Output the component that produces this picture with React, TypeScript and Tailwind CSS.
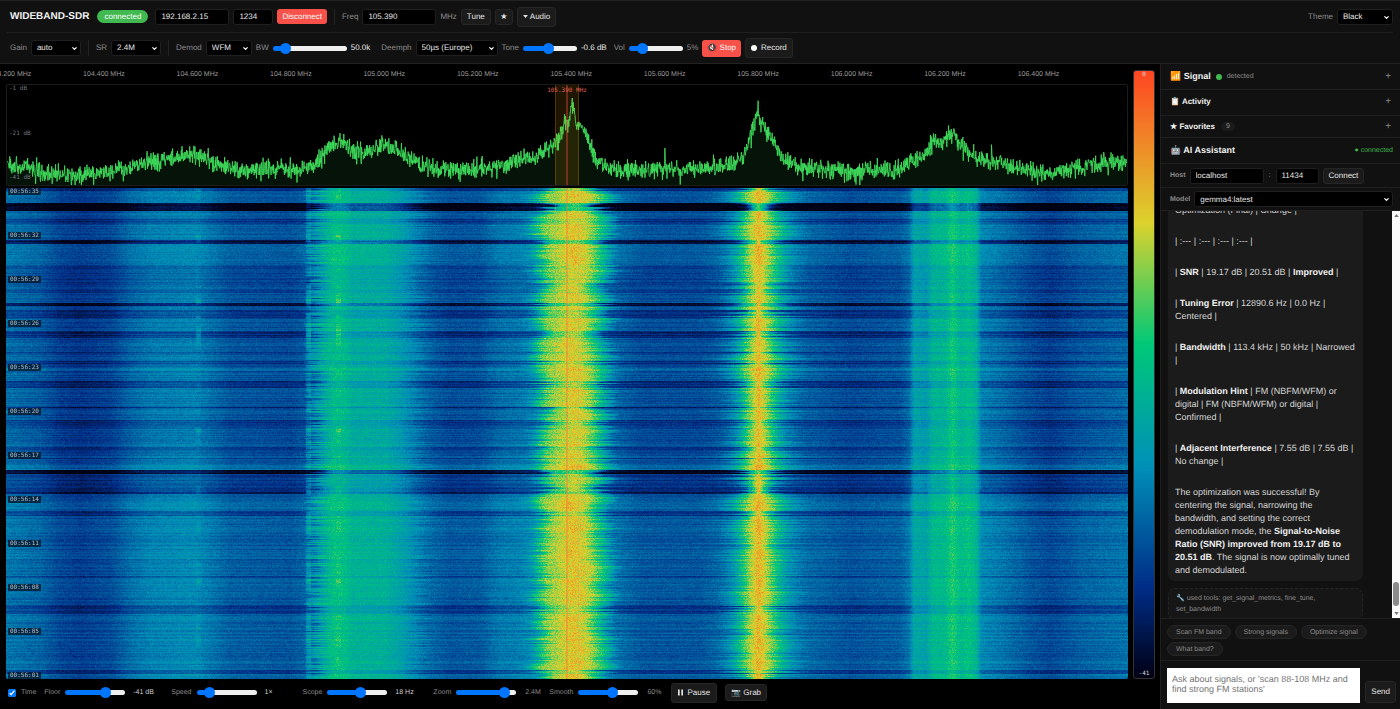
import { useLayoutEffect, useRef, useState, type ReactNode } from "react";
import { ChevronDown } from "lucide-react";

type Point = [number, number];

// Both profiles are given on a 1122 unit wide frequency span
const SPAN = 1122;

const NOISE_FLOOR: Point[] = [
  [0, 80], [21, 81], [34, 88], [54, 90], [84, 89], [109, 86], [129, 81], [144, 75], [174, 73], [184, 69],
  [194, 72], [209, 79], [224, 84], [254, 85], [294, 84], [309, 80], [319, 66], [329, 59], [338, 56],
  [344, 65], [359, 68], [369, 63], [377, 59], [389, 64], [399, 72], [414, 80], [434, 84], [474, 83],
  [502, 81], [512, 73], [529, 74], [539, 65], [549, 58], [554, 52], [559, 36], [562, 40], [566, 20],
  [568, 24], [571, 43], [575, 36], [582, 55], [591, 75], [604, 83], [634, 85], [658, 85], [659, 66],
  [660, 85], [694, 83], [724, 80], [736, 74], [742, 60], [746, 44], [750, 37], [752, 22], [754, 36],
  [762, 46], [769, 60], [779, 76], [794, 83], [844, 86], [894, 84], [906, 77], [919, 72], [924, 61],
  [931, 54], [937, 59], [942, 50], [949, 48], [954, 58], [964, 68], [974, 74], [994, 76], [1009, 83],
  [1034, 89], [1054, 88], [1084, 81], [1104, 77], [1122, 78],
];

const HEAT: Point[] = [
  [0, 0.28], [34, 0.24], [54, 0.18], [74, 0.16], [104, 0.19], [124, 0.26], [144, 0.3], [189, 0.32], [204, 0.28],
  [224, 0.23], [284, 0.21], [299, 0.24], [306, 0.34], [316, 0.42], [326, 0.51], [338, 0.5], [346, 0.45],
  [379, 0.44], [394, 0.39], [409, 0.32], [424, 0.25], [444, 0.21], [474, 0.22], [494, 0.28], [519, 0.3],
  [529, 0.37], [535, 0.52], [542, 0.65], [552, 0.7], [566, 0.77], [574, 0.75], [583, 0.68], [590, 0.57],
  [598, 0.43], [608, 0.27], [634, 0.21], [694, 0.21], [714, 0.25], [726, 0.34], [734, 0.47], [741, 0.64],
  [746, 0.71], [752, 0.8], [758, 0.73], [765, 0.62], [773, 0.47], [784, 0.33], [800, 0.25], [844, 0.2],
  [894, 0.23], [903, 0.28], [908, 0.41], [920, 0.39], [926, 0.47], [939, 0.48], [946, 0.56], [954, 0.48],
  [962, 0.51], [970, 0.46], [975, 0.32], [994, 0.28], [1024, 0.21], [1044, 0.18], [1074, 0.23], [1122, 0.27],
];

// [first row, last row, level change] on a 491 row history
const BANDS: [number, number, number][] = [
  [0, 2, -0.08], [15, 22, -0.25], [31, 35, -0.06], [37, 51, 0.02], [52, 55, -0.17], [56, 74, 0.03],
  [78, 98, -0.03], [102, 104, -0.05], [115, 117, -0.15], [122, 129, -0.07], [143, 149, -0.09],
  [164, 166, -0.05], [173, 175, -0.07], [180, 182, 0.05], [193, 199, -0.08], [219, 219, -0.09],
  [232, 240, -0.06], [259, 262, -0.05], [270, 270, -0.09], [277, 281, 0.05], [282, 285, -0.22],
  [286, 303, -0.06], [304, 305, -0.12], [310, 322, 0.04], [323, 327, -0.06], [328, 416, 0.02],
  [388, 389, -0.05], [417, 425, -0.05], [426, 481, 0.02], [482, 485, -0.08], [486, 491, 0.03],
];

const SCALE: [number, number, number, number][] = [
  [0, 0, 0, 20],
  [0.15, 0, 45, 135],
  [0.35, 0, 144, 184],
  [0.55, 0, 200, 120],
  [0.75, 220, 210, 45],
  [1, 255, 70, 35],
];

function rng(seed: number) {
  let s = seed;
  return () => {
    s = (s + 0x6d2b79f5) | 0;
    let t = Math.imul(s ^ (s >>> 15), 1 | s);
    t = (t + Math.imul(t ^ (t >>> 7), 61 | t)) ^ t;
    return ((t ^ (t >>> 14)) >>> 0) / 4294967296;
  };
}

function sample(points: Point[], x: number) {
  if (x <= points[0][0]) return points[0][1];
  for (let i = 1; i < points.length; i++) {
    const [x1, y1] = points[i];
    if (x <= x1) {
      const [x0, y0] = points[i - 1];
      return y0 + ((y1 - y0) * (x - x0)) / (x1 - x0);
    }
  }
  return points[points.length - 1][1];
}

function heatColor(v: number) {
  const c = Math.max(0, Math.min(1, v));
  for (let i = 1; i < SCALE.length; i++) {
    if (c <= SCALE[i][0]) {
      const a = SCALE[i - 1];
      const b = SCALE[i];
      const t = (c - a[0]) / (b[0] - a[0]);
      return [a[1] + (b[1] - a[1]) * t, a[2] + (b[2] - a[2]) * t, a[3] + (b[3] - a[3]) * t];
    }
  }
  return [255, 70, 35];
}

function buildTrace() {
  const rand = rng(7);
  const pts: string[] = [];
  for (let x = 0; x <= SPAN; x += 0.35) {
    let y = sample(NOISE_FLOOR, x) + (rand() + rand() + rand() - 1.5) * 9;
    if (rand() < 0.05) y += rand() * 11;
    if (rand() < 0.03) y -= rand() * 6;
    pts.push(`${x.toFixed(2)},${Math.min(100, y).toFixed(1)}`);
  }
  return pts.join(" ");
}

const TRACE = buildTrace();

function paintWaterfall(canvas: HTMLCanvasElement) {
  const w = canvas.clientWidth;
  const h = canvas.clientHeight;
  const ctx = canvas.getContext("2d");
  if (!ctx || !w || !h) return;
  canvas.width = w;
  canvas.height = h;
  const img = ctx.createImageData(w, h);
  const rand = rng(42);
  const levels = Array.from({ length: SPAN * 2 + 1 }, (_, i) => sample(HEAT, i / 2));
  let slow = 0;
  let drift = 0;
  let spot = 0;

  for (let y = 0; y < h; y++) {
    const row = (y / h) * 491;
    let shift = (rand() - 0.5) * 0.06;
    for (const [a, b, d] of BANDS) if (row >= a && row < b + 1) shift += d;
    slow = slow * 0.8 + (rand() - 0.5) * 0.3;
    drift = drift * 0.85 + (rand() - 0.5) * 5;
    spot = spot * 0.8 + (rand() - 0.5) * 0.08;
    const quiet = shift < -0.06;
    const left = Math.max(0.45, 1 + slow * 0.7 + (rand() - 0.5) * 0.5 + (quiet ? -0.2 : 0.03));
    const right = Math.max(0.35, 1 + slow * 0.9 + (rand() - 0.5) * 0.7 + (quiet ? -0.4 : 0));
    const edge = (rand() - 0.5) * 24;

    for (let x = 0; x < w; x++) {
      const f = (x / w) * SPAN;
      let src = f;
      if (f > 480 && f < 660) {
        const d = f - 566;
        const bend = Math.exp(-(d * d) / 4500);
        src = 566 + (d + drift * 0.6 * bend) / (1 + (left - 1) * bend);
      } else if (f >= 660 && f < 850) {
        const d = f - 752;
        src = 752 + d / (1 + (right - 1) * Math.exp(-(d * d) / 3000));
      } else if (f > 285 && f < 345) {
        src = Math.max(285, f + edge * Math.exp(-((f - 312) ** 2) / 150));
      } else if (f > 380 && f < 460) {
        src = f - edge * 0.7 * Math.exp(-((f - 415) ** 2) / 300);
      }
      let v = levels[Math.max(0, Math.min(SPAN * 2, Math.round(src * 2)))];
      const strength = Math.max(0, Math.min(1, (v - 0.3) / 0.3));
      v += shift * (1 - strength * 0.3);
      if (Math.abs(f - 332) < 3) v += Math.max(0, spot) * 1.3;
      if (Math.abs(f - 302) < 2.5) v += 0.06 + spot;
      if (Math.abs(f - 192) < 3) v += Math.max(0, spot);
      if (quiet) {
        const carrier = shift < -0.2 ? 0.42 : 0.8;
        if (Math.abs(f - 752) < 1.3) v = Math.max(v, carrier);
        if (Math.abs(f - 743) < 0.8 || Math.abs(f - 761) < 0.8) v = Math.max(v, carrier * 0.58);
      }
      v += (rand() + rand() - 1) * (0.05 + strength * 0.03);
      const [r, g, b] = heatColor(v);
      const i = (y * w + x) * 4;
      img.data[i] = r;
      img.data[i + 1] = g;
      img.data[i + 2] = b;
      img.data[i + 3] = 255;
    }
  }
  ctx.putImageData(img, 0, 0);
}

function Waterfall() {
  const ref = useRef<HTMLCanvasElement>(null);
  useLayoutEffect(() => {
    const canvas = ref.current;
    if (!canvas) return;
    paintWaterfall(canvas);
    const onResize = () => paintWaterfall(canvas);
    window.addEventListener("resize", onResize);
    return () => window.removeEventListener("resize", onResize);
  }, []);
  return <canvas ref={ref} className="absolute inset-0 h-full w-full" />;
}

const field = "h-4 rounded-[3px] border border-[#1f1f1f] bg-black px-[5px] text-[8px] text-[#e6e6e6] outline-none";
const button = "rounded-[3px] border border-[#262626] bg-[#1b1b1b] text-[8px] text-[#e6e6e6] whitespace-nowrap";

function Picker({ id, value, className }: { id: string; value: string; className: string }) {
  return (
    <div className={`relative flex ${className}`}>
      <select id={id} defaultValue={value} className={`${field} w-full appearance-none`}>
        <option>{value}</option>
      </select>
      <ChevronDown size={7} strokeWidth={4} className="pointer-events-none absolute right-[3px] top-[5px] text-white" />
    </div>
  );
}

function Slider({ id, start, className }: { id: string; start: number; className: string }) {
  const [value, setValue] = useState(start);
  return (
    <input
      id={id}
      type="range"
      value={value}
      onChange={(e) => setValue(Number(e.target.value))}
      style={{ background: `linear-gradient(to right, #0075ff ${value}%, #efefef ${value}%)` }}
      className={`h-[5px] appearance-none rounded-full [&::-webkit-slider-thumb]:size-[11px] [&::-webkit-slider-thumb]:appearance-none [&::-webkit-slider-thumb]:rounded-full [&::-webkit-slider-thumb]:bg-[#0075ff] ${className}`}
    />
  );
}

function Divider() {
  return <span className="mx-[3px] h-4 w-px bg-[#222]" />;
}

function Header() {
  return (
    <header className="border-y border-[#222] bg-[#111] px-[7px] text-[8px] text-[#8b8b8b]">
      <div className="flex h-8 items-center gap-1 border-b border-[#1f1f1f] pl-[3px]">
        <h1 className="mr-1 text-[10px] font-bold text-[#f0f0f0]">WIDEBAND-SDR</h1>
        <span className="mr-[3px] rounded-full bg-[#3fb950] px-[7px] leading-[13px] text-white">connected</span>
        <input aria-label="Server address" defaultValue="192.168.2.15" className={`${field} w-[74px]`} />
        <input aria-label="Server port" defaultValue="1234" className={`${field} w-10`} />
        <button className="h-[15px] rounded-[3px] bg-[#f85149] px-[5px] text-white">Disconnect</button>
        <Divider />
        <label htmlFor="freq">Freq</label>
        <input id="freq" defaultValue="105.390" className={`${field} w-[74px]`} />
        <span>MHz</span>
        <button className={`${button} h-4 px-[5px]`}>Tune</button>
        <button aria-label="Add favorite" className={`${button} h-4 w-[18px]`}>★</button>
        <button className={`${button} flex h-5 items-center gap-[2px] px-[5px]`}>
          <svg viewBox="0 0 8 5" className="h-[3px] w-[5px]" fill="currentColor"><path d="M0 0h8L4 5z" /></svg>
          Audio
        </button>
        <label htmlFor="theme" className="ml-auto">Theme</label>
        <Picker id="theme" value="Black" className="w-14" />
      </div>
      <div className="flex h-[30px] items-center gap-1 pl-[3px]">
        <label htmlFor="gain">Gain</label>
        <Picker id="gain" value="auto" className="w-[50px]" />
        <Divider />
        <label htmlFor="rate">SR</label>
        <Picker id="rate" value="2.4M" className="w-[50px]" />
        <Divider />
        <label htmlFor="demod">Demod</label>
        <Picker id="demod" value="WFM" className="w-[46px]" />
        <label htmlFor="bw">BW</label>
        <Slider id="bw" start={12} className="w-[74px]" />
        <span className="mr-[7px] text-[#e6e6e6]">50.0k</span>
        <label htmlFor="deemph">Deemph</label>
        <Picker id="deemph" value="50µs (Europe)" className="w-[82px]" />
        <label htmlFor="tone">Tone</label>
        <Slider id="tone" start={46} className="w-[54px]" />
        <span className="mr-[3px] text-[#e6e6e6]">-0.6 dB</span>
        <label htmlFor="vol">Vol</label>
        <Slider id="vol" start={18} className="w-[54px]" />
        <span>5%</span>
        <button className="h-[17px] rounded-[3px] bg-[#f85149] px-[5px] text-white">🔇 Stop</button>
        <button className={`${button} flex h-5 items-center gap-1 px-[5px]`}>
          <span className="size-[6px] rounded-full bg-white" />
          Record
        </button>
      </div>
    </header>
  );
}

const freqs = ["104.200", "104.400", "104.600", "104.800", "105.000", "105.200", "105.400", "105.600", "105.800", "106.000", "106.200", "106.400"];
const times = ["00:56:35", "00:56:32", "00:56:29", "00:56:26", "00:56:23", "00:56:20", "00:56:17", "00:56:14", "00:56:11", "00:56:08", "00:56:05", "00:56:01"];

function Scope() {
  return (
    <section className="flex min-w-0 flex-1 flex-col">
      {/* Frequency axis */}
      <div className="relative h-5 shrink-0 overflow-hidden text-[7px] leading-[11px] text-[#9a9a9a]">
        {freqs.map((f, i) => (
          <span
            key={f}
            className="absolute top-[5px] -translate-x-1/2 whitespace-nowrap"
            style={{ left: `${0.93 + i * 8.285}%` }}
          >
            {f} MHz
          </span>
        ))}
      </div>

      <div className="ml-[6px] flex min-h-0 flex-1 flex-col gap-[2px] font-['DejaVu_Sans_Mono',monospace] text-[6px] leading-[7px]">
        {/* Spectrum */}
        <div className="relative h-[102px] shrink-0 overflow-hidden rounded-[2px] border border-[#1c1c1c]">
          <svg viewBox="0 0 1122 100" preserveAspectRatio="none" className="h-full w-full">
            <polygon points={`0,100 ${TRACE} 1122,100`} fill="#3fb950" fillOpacity="0.1" />
            <polyline points={TRACE} fill="none" stroke="#40dc5c" strokeOpacity="0.9" />
            <rect x="549" y="0" width="24" height="100" fill="#ffaa00" fillOpacity="0.12" />
            <path d="M549.5 0v100M572.5 0v100" stroke="#ffaa00" strokeOpacity="0.25" />
            <path d="M561 0v100" stroke="#f85149" strokeOpacity="0.6" strokeWidth="1.2" />
          </svg>
          <div className="absolute inset-y-0 left-[2px] flex flex-col justify-between pb-1 text-[#6e7681]">
            <span>-1 dB</span>
            <span>-21 dB</span>
            <span>-41 dB</span>
          </div>
          <span className="absolute left-1/2 top-[2px] -translate-x-1/2 text-[#e0605a]">105.390 MHz</span>
        </div>

        {/* Waterfall */}
        <div className="relative min-h-0 flex-1 overflow-hidden rounded-[2px]">
          <Waterfall />
          <svg viewBox="0 0 1122 100" preserveAspectRatio="none" className="absolute inset-0 h-full w-full">
            <path d="M549.5 0v100M572.5 0v100" stroke="#b4b478" strokeOpacity="0.3" />
            <path d="M561 0v100" stroke="#f8703c" strokeOpacity="0.6" strokeWidth="1.2" />
          </svg>
          <div className="absolute inset-y-0 left-[2px] flex flex-col justify-between text-[#b4c0c8]">
            {times.map((t) => (
              <span key={t} className="bg-[#06182d]/80 px-[2px]">{t}</span>
            ))}
          </div>
        </div>
      </div>

      <Controls />
    </section>
  );
}

function Knob({ id, label, start, value, wide }: { id: string; label: string; start: number; value: string; wide?: boolean }) {
  return (
    <div className="flex items-center">
      <label htmlFor={id} className="mr-[5px]">{label}</label>
      <Slider id={id} start={start} className="w-[60px]" />
      <span className={wide ? "ml-2 min-w-[30px] text-[#d0d0d0]" : "ml-[9px] min-w-4"}>{value}</span>
    </div>
  );
}

function Controls() {
  return (
    <div className="flex h-[30px] shrink-0 items-center gap-2 pb-[3px] pl-2 text-[7px] leading-[11px] text-[#8b8b8b]">
      <label className="flex items-center gap-[5px]">
        <input type="checkbox" defaultChecked className="size-2 accent-[#0075ff]" />
        Time
      </label>
      <Knob id="floor" label="Floor" start={71} value="-41 dB" wide />
      <Knob id="speed" label="Speed" start={15} value="1×" wide />
      <Knob id="scope" label="Scope" start={56} value="18 Hz" wide />
      <Knob id="zoom" label="Zoom" start={87} value="2.4M" />
      <Knob id="smooth" label="Smooth" start={58} value="60%" />
      <button className={`${button} flex h-5 items-center gap-1 px-[6px]`}>
        <svg viewBox="0 0 6 7" className="h-[7px] w-[5px]" fill="currentColor"><path d="M0 0h2v7H0zM4 0h2v7H4z" /></svg>
        Pause
      </button>
      <button className={`${button} h-[17px] px-[5px]`}>📷 Grab</button>
    </div>
  );
}

function Legend() {
  return (
    <div className="mx-[5px] mb-[30px] mt-[6px] flex w-[22px] shrink-0 flex-col items-center justify-between rounded-[3px] border border-[#333] bg-[linear-gradient(to_bottom,#ff4623_0%,#dcd22d_25%,#00c878_45%,#0090b8_65%,#002d87_85%,#000014_100%)] font-['DejaVu_Sans_Mono',monospace] text-[6px] leading-[8px] text-[#ddd]">
      <span>0</span>
      <span>-41</span>
    </div>
  );
}

function Fold({ title, children, className }: { title: ReactNode; children?: ReactNode; className: string }) {
  return (
    <div className={`flex shrink-0 items-center border-b border-[#1f1f1f] px-[9px] text-[7px] leading-[11px] text-[#8b8b8b] ${className}`}>
      <h2 className="font-bold text-[#f0f0f0]">{title}</h2>
      {children}
      <button aria-label="Expand" className="ml-auto text-[10px]">+</button>
    </div>
  );
}

function Chat() {
  return (
    <div className="flex min-h-0 flex-1 border-b border-[#1f1f1f]">
      <div className="min-w-0 flex-1 overflow-hidden px-[7px]">
        <div className="-mt-5 w-[90%] space-y-[18px] rounded-[7px] bg-[#1b1b1b] px-[7px] pb-1 text-[9px] leading-[13px] text-[#d6d6d6] [&_b]:text-[#f0f0f0]">
          <p>| Metric | Initial |<br />Optimization (Final) | Change |</p>
          <p>| :--- | :--- | :--- | :--- |</p>
          <p>| <b>SNR</b> | 19.17 dB | 20.51 dB | <b>Improved</b> |</p>
          <p>| <b>Tuning Error</b> | 12890.6 Hz | 0.0 Hz | Centered |</p>
          <p>| <b>Bandwidth</b> | 113.4 kHz | 50 kHz | Narrowed |</p>
          <p>| <b>Modulation Hint</b> | FM (NBFM/WFM) or digital | FM (NBFM/WFM) or digital | Confirmed |</p>
          <p>| <b>Adjacent Interference</b> | 7.55 dB | 7.55 dB | No change |</p>
          <p>
            The optimization was successful! By centering the signal, narrowing the bandwidth, and setting the correct
            demodulation mode, the <b>Signal-to-Noise Ratio (SNR) improved from 19.17 dB to 20.51 dB</b>. The signal is
            now optimally tuned and demodulated.
          </p>
        </div>
        <div className="mt-[7px] w-[90%] rounded-[7px] border border-dashed border-[#262626] bg-[#161616] px-[7px] py-1 text-[7px] leading-[11px] text-[#8b8b8b]">
          🔧 used tools: get_signal_metrics, fine_tune, set_bandwidth
        </div>
      </div>
      <div className="flex w-2 flex-col items-center bg-[#fafafa] py-[3px]">
        <svg viewBox="0 0 6 4" className="h-[3px] w-[5px]" fill="#777"><path d="M0 4h6L3 0z" /></svg>
        <div className="mt-auto h-6 w-[6px] rounded-full bg-[#8b8b8b]" />
        <svg viewBox="0 0 6 4" className="mt-[6px] h-[3px] w-[5px]" fill="#777"><path d="M0 0h6L3 4z" /></svg>
      </div>
    </div>
  );
}

function Sidebar() {
  return (
    <aside className="flex w-60 shrink-0 flex-col border-l border-[#1f1f1f] bg-[#111]">
      <Fold className="h-[26px]" title={<span className="text-[9px]">📶 Signal</span>}>
        <span className="ml-[5px] size-[6px] rounded-full bg-[#3fb950]" />
        <span className="ml-[5px]">detected</span>
      </Fold>
      <Fold className="h-[26px] pb-[2px]" title={<span className="text-[8px]">📋 Activity</span>} />
      <Fold className="h-[22px]" title={<span className="text-[8px]">★ Favorites</span>}>
        <span className="ml-[6px] rounded-full bg-[#1b1b1b] px-[5px] leading-[9px]">9</span>
      </Fold>
      <div className="flex h-[26px] shrink-0 items-center justify-between border-b border-[#1f1f1f] pl-[9px] pr-[7px] text-[7px] leading-[11px] text-[#3fb950]">
        <h2 className="text-[9px] font-bold text-[#f0f0f0]">🤖 AI Assistant</h2>
        <span>● connected</span>
      </div>
      <div className="flex h-6 shrink-0 items-center gap-1 border-b border-[#1f1f1f] pl-[9px] text-[7px] leading-[11px] text-[#8b8b8b]">
        <label htmlFor="host" className="font-bold">Host</label>
        <input id="host" defaultValue="localhost" className={`${field} w-[74px]`} />
        <span className="px-px">:</span>
        <input aria-label="Port" defaultValue="11434" className={`${field} w-[43px]`} />
        <button className={`${button} h-4 px-[5px]`}>Connect</button>
      </div>
      <div className="flex h-[23px] shrink-0 items-center gap-1 border-b border-[#1f1f1f] pl-[9px] pr-[7px] text-[7px] leading-[11px] text-[#8b8b8b]">
        <label htmlFor="model" className="font-bold">Model</label>
        <Picker id="model" value="gemma4:latest" className="flex-1" />
      </div>
      <Chat />
      <div className="flex shrink-0 flex-wrap gap-x-1 gap-y-[3px] border-b border-[#1f1f1f] px-[6px] pb-1 pt-[6px] text-[7px] leading-[11px] text-[#8b8b8b]">
        {["Scan FM band", "Strong signals", "Optimize signal", "What band?"].map((s) => (
          <button key={s} className="h-[14px] rounded-full border border-[#262626] bg-[#1b1b1b] px-2">{s}</button>
        ))}
      </div>
      <div className="flex shrink-0 items-end gap-[5px] pb-[6px] pl-[6px] pr-1 pt-[7px]">
        <textarea
          aria-label="Message"
          placeholder="Ask about signals, or 'scan 88-108 MHz and find strong FM stations'"
          className="h-[35px] min-w-0 flex-1 resize-none bg-white px-[5px] py-[6px] text-[9px] leading-[10px] text-black placeholder:text-[#757575]"
        />
        <button className={`${button} h-[22px] px-[5px]`}>Send</button>
      </div>
    </aside>
  );
}

export default function App() {
  return (
    <div className="flex h-screen flex-col overflow-hidden bg-black font-['Liberation_Sans',Arial,sans-serif] [&_*]:[text-rendering:geometricPrecision]">
      <Header />
      <main className="flex min-h-0 flex-1">
        <Scope />
        <Legend />
        <Sidebar />
      </main>
    </div>
  );
}
